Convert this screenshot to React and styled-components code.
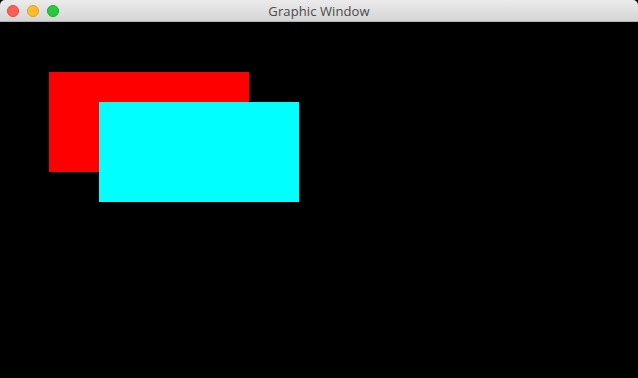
import React from "react";
import styled, { createGlobalStyle } from "styled-components";

const Global = createGlobalStyle`
  html, body { margin: 0; padding: 0; background: #000; }
  body { font-family: "Liberation Sans", Arial, sans-serif; }
`;

const Window = styled.div`
  width: 638px;
  height: 378px;
  display: flex;
  flex-direction: column;
  background: #000;
  overflow: hidden;
`;

const TitleBar = styled.div`
  position: relative;
  height: 21px;
  flex: 0 0 21px;
  display: flex;
  align-items: center;
  justify-content: center;
  background: linear-gradient(#ebebeb, #d5d5d5);
  border-bottom: 1px solid #b4b4b4;
  border-radius: 5px 5px 0 0;
`;

const Lights = styled.div`
  position: absolute;
  left: 7px;
  top: 5px;
  display: flex;
  gap: 8px;
`;

const Light = styled.span`
  width: 12px;
  height: 12px;
  border-radius: 50%;
  box-sizing: border-box;
  background: ${(p) => p.$fill};
  border: 0.5px solid ${(p) => p.$edge};
`;

const Title = styled.span`
  font-family: "Open Sans", "Noto Sans", sans-serif;
  font-size: 13px;
  color: #4a4a4a;
  letter-spacing: 0.1px;
`;

const Canvas = styled.div`
  position: relative;
  flex: 1;
  background: #000;
`;

const Rect = styled.div`
  position: absolute;
  left: ${(p) => p.$x}px;
  top: ${(p) => p.$y}px;
  width: ${(p) => p.$w}px;
  height: ${(p) => p.$h}px;
  background: ${(p) => p.$color};
`;

const shapes = [
  { x: 49, y: 50, w: 200, h: 100, color: "#ff0000" },
  { x: 99, y: 80, w: 200, h: 100, color: "#00ffff" },
];

export default function App() {
  return (
    <Window>
      <Global />
      <TitleBar>
        <Lights>
          <Light $fill="#fe5f57" $edge="#e2463f" />
          <Light $fill="#febc2e" $edge="#e1a116" />
          <Light $fill="#28c840" $edge="#12ac28" />
        </Lights>
        <Title>Graphic Window</Title>
      </TitleBar>
      <Canvas>
        {shapes.map((s, i) => (
          <Rect key={i} $x={s.x} $y={s.y} $w={s.w} $h={s.h} $color={s.color} />
        ))}
      </Canvas>
    </Window>
  );
}
